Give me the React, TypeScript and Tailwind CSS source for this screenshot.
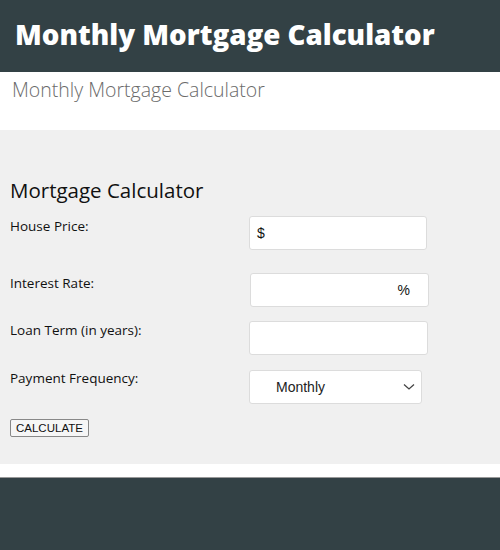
import React from "react";

export default function App() {
  return (
    <div className="w-[500px] h-[550px] bg-white flex flex-col overflow-hidden" style={{ fontFamily: "'Open Sans', sans-serif" }}>
      <div className="h-[72px] bg-[#334145] flex items-center pl-[15px] pb-[3px]">
        <h1 className="text-white text-[27.7px] font-extrabold tracking-[0px] leading-none font-['Open_Sans',sans-serif]">
          Monthly Mortgage Calculator
        </h1>
      </div>
      <div className="h-[58px] bg-white pl-[12px] pt-[6px]">
        <p className="text-[#6b6b6b] text-[19.5px] font-light leading-[24px] font-['Open_Sans',sans-serif]">
          Monthly Mortgage Calculator
        </p>
      </div>
      <div className="h-[334px] bg-[#f0f0f0] pl-[10px] pt-[47px] flex flex-col">
        <h2 className="text-[#111] text-[20.5px] leading-[26px] font-['Open_Sans',sans-serif]">Mortgage Calculator</h2>
        <div className="relative mt-[13px] h-[270px] text-[13.5px] text-[#111] font-['Open_Sans',sans-serif]">
          <div className="flex flex-col">
            <div className="flex items-start h-[57px]">
              <span className="w-[239px] leading-[18px] mt-[1px]">House Price:</span>
              <div className="w-[178px] h-[34px] bg-white border border-[#dcdcdc] rounded-[3px] flex items-center pl-[7px] font-['Liberation_Sans',sans-serif] text-[14px]">$</div>
            </div>
            <div className="flex items-start h-[48px]">
              <span className="w-[240px] leading-[18px] mt-[1px]">Interest Rate:</span>
              <div className="w-[179px] h-[34px] bg-white border border-[#dcdcdc] rounded-[3px] flex items-center justify-end pr-[18px] font-['Liberation_Sans',sans-serif] text-[14px]">%</div>
            </div>
            <div className="flex items-start h-[49px]">
              <span className="w-[239px] leading-[18px] mt-[0px]">Loan Term (in years):</span>
              <div className="w-[179px] h-[34px] bg-white border border-[#dcdcdc] rounded-[3px]"></div>
            </div>
            <div className="flex items-start h-[47px]">
              <span className="w-[239px] leading-[18px] mt-[-1px]">Payment Frequency:</span>
              <div className="w-[173px] h-[34px] bg-white border border-[#dcdcdc] rounded-[3px] flex items-center pl-[26px] pr-[6px] justify-between font-['Liberation_Sans',sans-serif] text-[14px] text-[#222]">
                <span>Monthly</span>
                <svg width="12" height="8" viewBox="0 0 12 8" fill="none"><path d="M1 1.5 L6 6 L11 1.5" stroke="#444" strokeWidth="1.3" /></svg>
              </div>
            </div>
            <div>
              <button className="h-[18px] px-[5px] border border-[#888] bg-[#f6f6f6] rounded-[2px] text-[11.5px] leading-[14px] text-[#111] font-['Liberation_Sans',sans-serif]">CALCULATE</button>
            </div>
          </div>
        </div>
      </div>
      <div className="h-[13px] bg-white"></div>
      <div className="h-[1px] bg-[#999]"></div>
      <div className="flex-1 bg-[#334145]"></div>
    </div>
  );
}
